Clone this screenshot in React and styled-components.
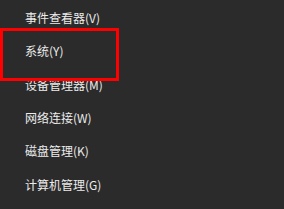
import React from "react";
import styled, { createGlobalStyle } from "styled-components";

const Global = createGlobalStyle`
  html, body {
    margin: 0;
    padding: 0;
    background: #2b2b2b;
  }
`;

const Menu = styled.div`
  position: relative;
  width: 284px;
  height: 209px;
  background: #2b2b2b;
  display: flex;
  flex-direction: column;
  padding-top: 1px;
  box-sizing: border-box;
  overflow: hidden;
`;

const Item = styled.div`
  height: 33.3px;
  display: flex;
  align-items: center;
  padding-left: 25px;
  color: #ececec;
  font-family: "Noto Sans CJK SC", "Microsoft YaHei", sans-serif;
  font-size: 12px;
  white-space: nowrap;
`;

const Highlight = styled.div`
  position: absolute;
  left: 0;
  top: 28px;
  width: 119px;
  height: 53px;
  border: 3px solid #ff0000;
  box-sizing: border-box;
  pointer-events: none;
`;

const items = [
  "事件查看器(V)",
  "系统(Y)",
  "设备管理器(M)",
  "网络连接(W)",
  "磁盘管理(K)",
  "计算机管理(G)",
];

export default function App() {
  return (
    <>
      <Global />
      <Menu>
        {items.map((label) => (
          <Item key={label}>{label}</Item>
        ))}
        <Highlight />
      </Menu>
    </>
  );
}
